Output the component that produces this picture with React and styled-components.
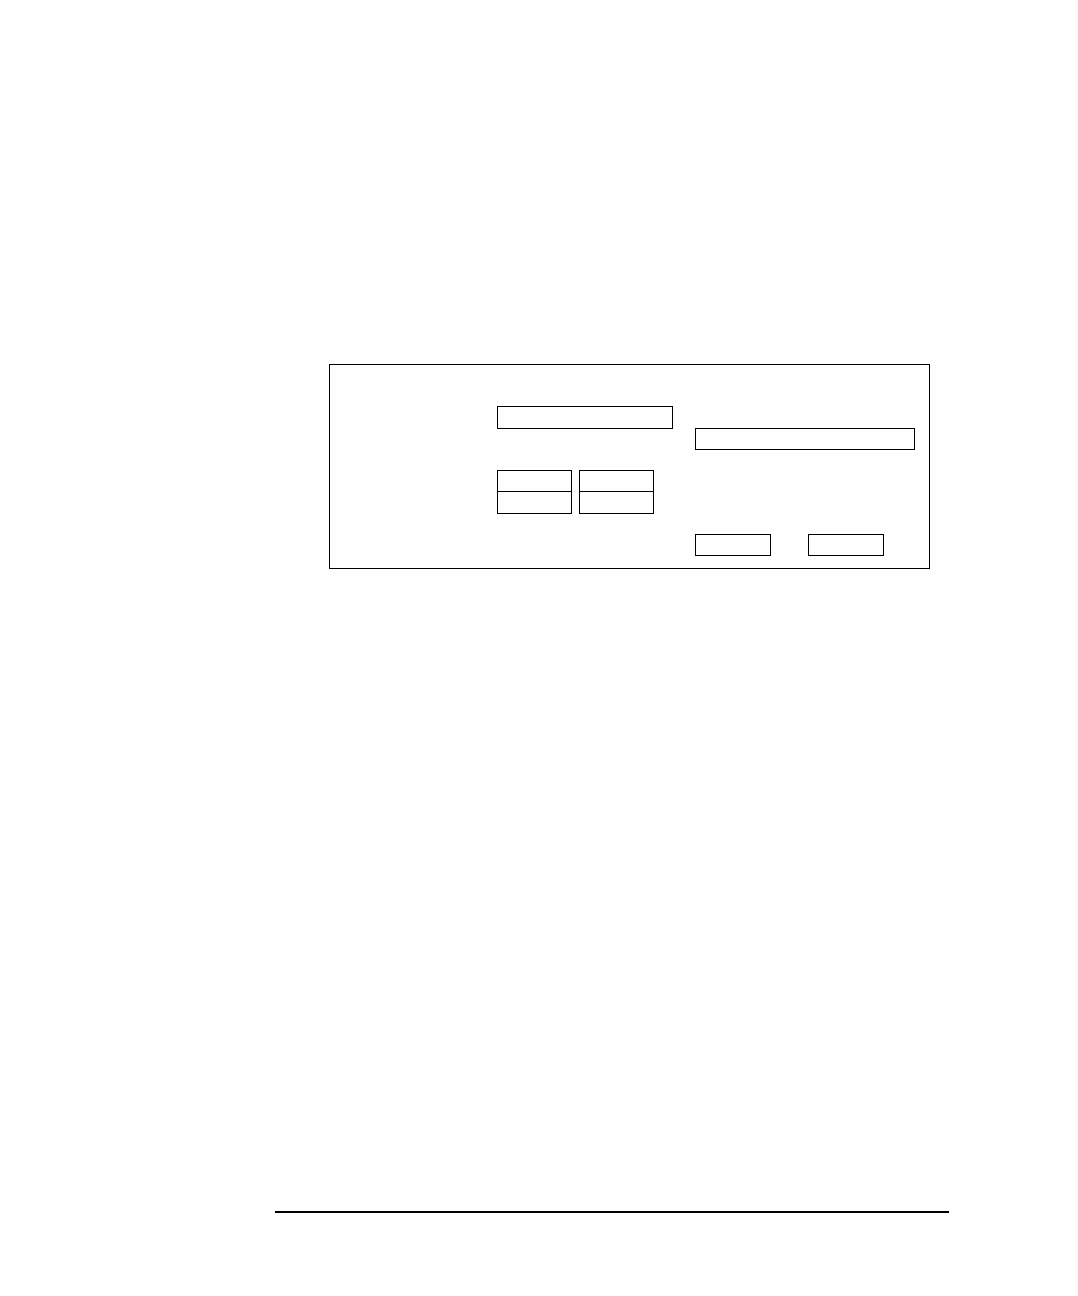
import React from "react";
import styled, { createGlobalStyle } from "styled-components";

const GlobalStyle = createGlobalStyle`
  *, *::before, *::after {
    box-sizing: border-box;
  }
  body {
    margin: 0;
    background: #fff;
    color: #000;
    font-family: "Liberation Sans", Arial, sans-serif;
  }
`;

const Page = styled.main`
  display: flex;
  flex-direction: column;
  justify-content: space-between;
  min-height: 100vh;
  padding: 364px 129px 83px 275px;
`;

const Panel = styled.form`
  display: grid;
  grid-template-columns: 176px minmax(0, 1fr);
  column-gap: 22px;
  margin: 0 19px 0 54px;
  padding: 41px 14px 12px 167px;
  border: 1px solid #000;
`;

const Column = styled.div`
  display: flex;
  flex-direction: column;
  gap: ${(p) => p.$gap}px;
  padding-top: ${(p) => p.$top || 0}px;
`;

const Field = styled.input`
  display: block;
  width: 100%;
  height: ${(p) => p.$height || 22}px;
  margin: 0;
  padding: 0 4px;
  border: 1px solid #000;
  border-radius: 0;
  background: #fff;
  font: 12px "Liberation Sans", Arial, sans-serif;
`;

const Pairs = styled.div`
  display: flex;
  gap: 7px;
`;

const Stack = styled.div`
  width: 75px;

  ${Field} + ${Field} {
    border-top: 0;
  }
`;

const Actions = styled.div`
  display: flex;
  gap: 37px;
`;

const Button = styled.button`
  width: 76px;
  height: 22px;
  padding: 0;
  border: 1px solid #000;
  border-radius: 0;
  background: #fff;
`;

const Rule = styled.hr`
  width: 100%;
  height: 2px;
  margin: 0;
  border: 0;
  background: #000;
`;

export default function App() {
  return (
    <>
      <GlobalStyle />
      <Page>
        <Panel onSubmit={(e) => e.preventDefault()}>
          <Column $gap={41}>
            <Field type="text" aria-label="Name" $height={23} />
            <Pairs>
              <Stack>
                <Field type="text" aria-label="First start" />
                <Field type="text" aria-label="First stop" />
              </Stack>
              <Stack>
                <Field type="text" aria-label="Second start" />
                <Field type="text" aria-label="Second stop" />
              </Stack>
            </Pairs>
          </Column>
          <Column $gap={84} $top={22}>
            <Field type="text" aria-label="Description" />
            <Actions>
              <Button type="submit" aria-label="Apply" />
              <Button type="reset" aria-label="Reset" />
            </Actions>
          </Column>
        </Panel>
        <Rule />
      </Page>
    </>
  );
}
